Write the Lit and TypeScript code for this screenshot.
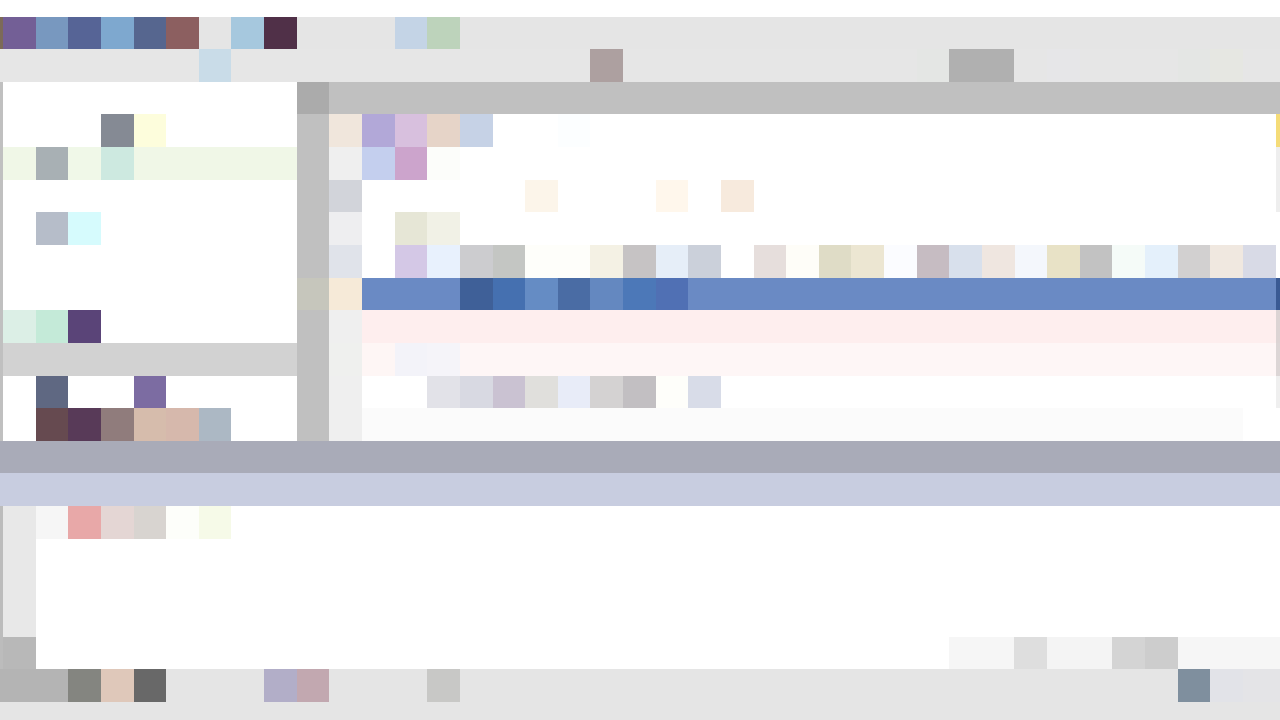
import { LitElement, html, css } from "lit";
import { customElement } from "lit/decorators.js";

type Cells = Record<number, string>;

/** One band of equally wide tiles; `fill` colours what is left at the right edge. */
const band = (count: number, cells: Cells, bg = "", fill = "") => html`
  <div class="band" style=${bg ? `background:${bg}` : ""}>
    ${Array.from({ length: count }, (_, i) =>
      html`<i class="tile" style=${cells[i] ? `background:${cells[i]}` : ""}></i>`)}
    <i class="fill" style=${fill ? `background:${fill}` : ""}></i>
  </div>`;

const toolbar: Array<{ lead: string; bg: string; cells: Cells }> = [
  {
    lead: "#7c6a58",
    bg: "#e5e5e5",
    cells: {
      0: "#735f96", 1: "#7898bf", 2: "#566496", 3: "#7ea8cf", 4: "#56668f", 5: "#8c5f60",
      7: "#a6c8de", 8: "#503048", 12: "#c4d4e6", 13: "#bdd3bb",
    },
  },
  {
    lead: "#e6e6e6",
    bg: "#e6e6e6",
    cells: {
      6: "#c9dce8", 18: "#ada0a0", 28: "#e4e6e4", 29: "#b0b0b0", 30: "#b0b0b0",
      32: "#e6e6e8", 36: "#e4e6e4", 37: "#e6e7e2",
    },
  },
];

const sidebar: Array<{ bg?: string; cells: Cells }> = [
  { cells: {} },
  { cells: { 3: "#858a94", 4: "#fdfddc" } },
  { bg: "#f0f7e7", cells: { 1: "#a8b0b4", 2: "#f0f8e8", 3: "#cde9e0" } },
  { cells: {} },
  { cells: { 1: "#b6bdc9", 2: "#d6fbfd" } },
  { cells: {} },
  { cells: {} },
  { cells: { 0: "#dcefe6", 1: "#c4ead8", 2: "#5a4478" } },
  { bg: "#d2d2d2", cells: {} },
  { cells: { 1: "#5f6882", 4: "#7c6ca2" } },
  { cells: { 1: "#664a50", 2: "#583a58", 3: "#907c7c", 4: "#d6bcac", 5: "#d6b8ac", 6: "#acb8c4" } },
];

const lineNumbers = [
  "#f0e6dc", "#efefef", "#d2d4da", "#eeeef0", "#e0e3ea", "#f6ead8",
  "#efefef", "#eff0ee", "#efefef", "#efefef",
];

const code: Array<{ bg?: string; cells: Cells; mark: string }> = [
  { cells: { 0: "#b2a8d8", 1: "#d8c0de", 2: "#e6d4c8", 3: "#c6d2e6", 6: "#fcfeff" }, mark: "#f5dc78" },
  { cells: { 0: "#c4cfee", 1: "#cca4cc", 2: "#fcfdfa" }, mark: "#eeeeee" },
  { cells: { 5: "#fcf5ea", 9: "#fff7ec", 11: "#f7eadd" }, mark: "#eeeeee" },
  { cells: { 1: "#e6e6d6", 2: "#f1f1e6" }, mark: "#ffffff" },
  {
    cells: {
      1: "#d4c8e6", 2: "#e8f1fd", 3: "#cccccf", 4: "#c4c6c3", 5: "#fefefa", 6: "#fefefa",
      7: "#f4f1e4", 8: "#c6c3c4", 9: "#e6eef8", 10: "#cbd0da", 12: "#e6dedc", 13: "#fefdf8",
      14: "#dfdcc6", 15: "#ece6d2", 16: "#fbfcff", 17: "#c6bcc2", 18: "#d8e0ec", 19: "#efe6e0",
      20: "#f4f7fc", 21: "#e8e2c6", 22: "#c2c2c2", 23: "#f5fbf8", 24: "#e4f0fb", 25: "#d2d0d0",
      26: "#f0e8e0", 27: "#d8dae6",
    },
    mark: "#ffffff",
  },
  {
    bg: "#6a8ac4",
    cells: {
      3: "#3f6098", 4: "#4570b0", 5: "#658cc4", 6: "#4a6ca4", 7: "#6488c0",
      8: "#4c78b8", 9: "#5070b4",
    },
    mark: "#3a5a94",
  },
  { bg: "#feeeee", cells: {}, mark: "#dcd4d4" },
  { bg: "#fef6f6", cells: { 0: "#fef6f5", 1: "#f3f3f9", 2: "#f5f4f9" }, mark: "#dcd6d6" },
  {
    cells: {
      2: "#e2e2e8", 3: "#d8d9e2", 4: "#cac2d2", 5: "#e0dfdc", 6: "#e8ecf8", 7: "#d4d2d2",
      8: "#c2bfc2", 9: "#fefefa", 10: "#d8dce8",
    },
    mark: "#efefef",
  },
  { bg: "#fbfbfb", cells: { 27: "#ffffff" }, mark: "#ffffff" },
];

const panelTop: Cells = { 0: "#f6f6f6", 1: "#e8a8a8", 2: "#e4d6d4", 3: "#d8d4d0", 4: "#fdfefa", 5: "#f6fae8" };
const panelBottom: Cells = {
  28: "#f6f6f6", 29: "#f6f6f6", 30: "#dedede", 31: "#f4f4f4", 32: "#f4f4f4",
  33: "#d4d4d4", 34: "#cdcdcd", 35: "#f6f6f6", 36: "#f6f6f6", 37: "#f6f6f6",
};
const status: Cells = {
  0: "#b4b4b4", 1: "#b4b4b4", 2: "#848580", 3: "#dfc8ba", 4: "#686868",
  8: "#b2aec8", 9: "#c2a8b0", 13: "#c8c8c6", 36: "#7f8f9e", 37: "#e2e3e8", 38: "#e4e4e7",
};

@customElement("app-root")
export class AppRoot extends LitElement {
  static styles = css`
    :host {
      display: flex;
      flex-direction: column;
      width: 1280px;
      height: 720px;
      overflow: hidden;
      background: #ffffff;
      --cell: 32.64px;
      --row: 32.65px;
      --rail: 3px;
    }
    .band { display: flex; height: var(--row); }
    .tile { display: block; flex: none; width: var(--cell); height: 100%; }
    .fill { display: block; flex: 1; min-width: 0; height: 100%; }

    .window-top { height: 16.5px; flex: none; }
    .toolbar { flex: none; background: #e5e5e5; }
    .with-rail { display: flex; }
    .rail { flex: none; width: var(--rail); }
    .grow { flex: 1; min-width: 0; }

    .workspace { flex: none; display: flex; }
    .workspace-rail { flex: none; width: var(--rail); background: #c0c0c0; }
    .sidebar { flex: none; width: calc(var(--cell) * 9); }
    .gutter { flex: none; width: var(--cell); background: #c0c0c0; }
    .gutter-cap { height: var(--row); background: #ababab; }
    .gutter-gap { height: calc(var(--row) * 5); }
    .gutter-mid { height: var(--row); background: #c6c6bc; }
    .editor { flex: 1; min-width: 0; }
    .tab-strip { height: var(--row); background: #c0c0c0; }
    .editor-body { display: flex; }
    .line-numbers { flex: none; width: var(--cell); }
    .line-numbers .tile { height: var(--row); }
    .code { flex: none; width: calc(var(--cell) * 28); }
    .overview { flex: 1; min-width: 0; }
    .overview .fill { height: var(--row); }

    .splitter { flex: none; height: var(--row); background: #a9abb8; }
    .panel-title { flex: none; height: var(--row); background: #c8cde0; }
    .panel { flex: none; display: flex; }
    .panel-rail { flex: none; width: var(--rail); background: #bcbcbc; }
    .panel-tools { flex: none; width: var(--cell); background: #e8e8e8; }
    .panel-tools-cap { height: var(--row); margin-top: calc(var(--row) * 4); background: #b8b8b8; }
    .panel-body { flex: 1; min-width: 0; }
    .panel-rows { height: calc(var(--row) * 3); }

    .status { flex: 1; background: #e5e5e5; }
  `;

  render() {
    return html`
      <div class="window-top"></div>

      <header class="toolbar">
        ${toolbar.map((r) => html`
          <div class="with-rail">
            <i class="rail" style="background:${r.lead}"></i>
            <div class="grow">${band(39, r.cells, r.bg)}</div>
          </div>`)}
      </header>

      <main class="workspace">
        <div class="workspace-rail"></div>
        <nav class="sidebar">
          ${sidebar.map((r) => band(9, r.cells, r.bg ?? ""))}
        </nav>
        <div class="gutter">
          <div class="gutter-cap"></div>
          <div class="gutter-gap"></div>
          <div class="gutter-mid"></div>
        </div>
        <section class="editor">
          <div class="tab-strip"></div>
          <div class="editor-body">
            <div class="line-numbers">
              ${lineNumbers.map((c) => html`<i class="tile" style="background:${c}"></i>`)}
            </div>
            <div class="code">
              ${code.map((r) => band(28, r.cells, r.bg ?? ""))}
            </div>
            <div class="overview">
              ${code.map((r) => html`<i class="fill" style="background:${r.mark}"></i>`)}
            </div>
          </div>
        </section>
      </main>

      <div class="splitter"></div>
      <div class="panel-title"></div>

      <section class="panel">
        <div class="panel-rail"></div>
        <div class="panel-tools"><div class="panel-tools-cap"></div></div>
        <div class="panel-body">
          ${band(38, panelTop)}
          <div class="panel-rows"></div>
          ${band(38, panelBottom, "", "#f6f6f6")}
        </div>
      </section>

      <footer class="status">
        <div class="with-rail">
          <i class="rail" style="background:#b4b4b4"></i>
          <div class="grow">${band(39, status, "", "#e4e4e7")}</div>
        </div>
      </footer>
    `;
  }
}
